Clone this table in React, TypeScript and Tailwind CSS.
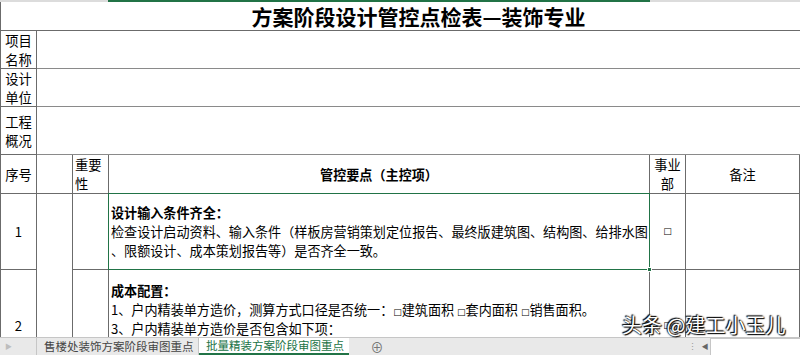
const line = "border-[#6b6b6b]";

function Box() {
  return <span className="font-['DejaVu_Sans',sans-serif] text-[9px] leading-none">□</span>;
}

export default function App() {
  return (
    <div className="relative flex h-[355px] w-[800px] flex-col overflow-hidden bg-white font-['Noto_Sans_CJK_SC',sans-serif] text-[13.1px] leading-[19px] text-black">
      {/* column header highlight strip */}
      <div className="flex h-[2px] shrink-0">
        <div className="w-[108px] bg-[#dcdcdc]" />
        <div className="w-[542px] bg-[#217346]" />
        <div className="flex-1 bg-[#dcdcdc]" />
      </div>

      {/* sheet */}
      <div className="min-h-0 flex-1 overflow-hidden">
        <div
          className={`grid grid-cols-[36px_36px_36px_541px_36px_114px] grid-rows-[29px_38px_38px_48px_39px_76px_112px] border-l ${line}`}
        >
          {/* title */}
          <div className={`col-span-6 flex items-center justify-center border-b pl-[36px] ${line}`}>
            <span className="text-[21px] font-bold leading-none">方案阶段设计管控点检表—装饰专业</span>
          </div>

          {/* info rows */}
          {[
            ["项目", "名称"],
            ["设计", "单位"],
            ["工程", "概况"],
          ].map(([a, b]) => (
            <div key={a} className="contents">
              <div className={`flex flex-col items-center justify-center border-r border-b text-[13.3px] ${line}`}>
                <span>{a}</span>
                <span>{b}</span>
              </div>
              <div className={`col-span-5 border-b border-[#8a8a8a]`} />
            </div>
          ))}

          {/* header */}
          <div className={`flex items-center justify-center border-r border-b text-[13.3px] ${line}`}>序号</div>
          <div className={`border-r border-b ${line}`} />
          <div className={`flex flex-col justify-center border-r border-b pl-[2px] text-[13.3px] ${line}`}>
            <span>重要</span>
            <span>性</span>
          </div>
          <div className={`flex items-center justify-center border-r border-b font-bold ${line}`}>
            管控要点（主控项）
          </div>
          <div className={`flex flex-col items-center justify-center border-r border-b text-[13.3px] ${line}`}>
            <span>事业</span>
            <span>部</span>
          </div>
          <div className={`flex items-center justify-center border-r border-b text-[13.3px] ${line}`}>备注</div>

          {/* row 1 */}
          <div className={`flex items-center justify-center border-r border-b ${line}`}>1</div>
          <div className={`row-span-2 border-r ${line}`} />
          <div className={`border-r border-b ${line}`} />
          <div className={`relative flex flex-col justify-center border-r border-b pl-[2px] whitespace-nowrap ${line}`}>
            <span className="font-bold">设计输入条件齐全：</span>
            <span>检查设计启动资料、输入条件（样板房营销策划定位报告、最终版建筑图、结构图、给排水图</span>
            <span>、限额设计、成本策划报告等）是否齐全一致。</span>
            <div className="absolute -inset-px border border-[#217346]" />
            <div className="absolute -right-[3px] -bottom-[3px] h-[5px] w-[5px] border border-white bg-[#217346]" />
          </div>
          <div className={`flex items-center justify-center border-r border-b ${line}`}>
            <Box />
          </div>
          <div className={`border-r border-b ${line}`} />

          {/* row 2 */}
          <div className={`flex items-center justify-center border-r border-b ${line}`}>2</div>
          <div className={`border-r border-b ${line}`} />
          <div className={`flex flex-col border-r border-b pt-[11px] pl-[2px] whitespace-nowrap ${line}`}>
            <span className="font-bold">成本配置：</span>
            <span>
              1、户内精装单方造价，测算方式口径是否统一：<Box />建筑面积 <Box />套内面积 <Box />销售面积。
            </span>
            <span>3、户内精装单方造价是否包含如下项：</span>
          </div>
          <div className={`flex items-center justify-center border-r border-b ${line}`}>
            <Box />
          </div>
          <div className={`border-r border-b ${line}`} />
        </div>
      </div>

      {/* sheet tabs */}
      <div className="flex h-[18px] shrink-0 items-stretch border-t border-[#c6c6c6] bg-[#e9e9e9] text-[11.5px] leading-none">
        <div className="flex w-[37px] items-center border-r border-[#c6c6c6] pl-[5px] text-[7px] text-[#bdbdbd]">▶</div>
        <div className="flex w-[162px] items-center border-r border-[#c6c6c6] pl-[7px] text-[#444]">
          售楼处装饰方案阶段审图重点
        </div>
        <div className="flex w-[150px] items-center border-b-2 border-[#217346] bg-white pl-[7px] text-[#217346]">
          批量精装方案阶段审图重点
        </div>
        <div className="flex w-[56px] items-center justify-center text-[13px] leading-none text-[#777]">⊕</div>
        <div className="flex-1" />
        <div className="flex w-[16px] items-center justify-center text-[9px] text-[#999]">⋮</div>
        <div className="flex w-[10px] items-center justify-center text-[7px] text-[#666]">◀</div>
        <div className="w-[90px] border-t border-l border-[#c6c6c6] bg-white" />
      </div>

      {/* watermark */}
      <div className="absolute top-[315px] left-[622px] text-[20px] leading-none whitespace-nowrap text-white [text-shadow:0_0_2px_#000,1px_1px_1px_#000,-1px_-1px_1px_#000]">
        头条 @建工小玉儿
      </div>
    </div>
  );
}
